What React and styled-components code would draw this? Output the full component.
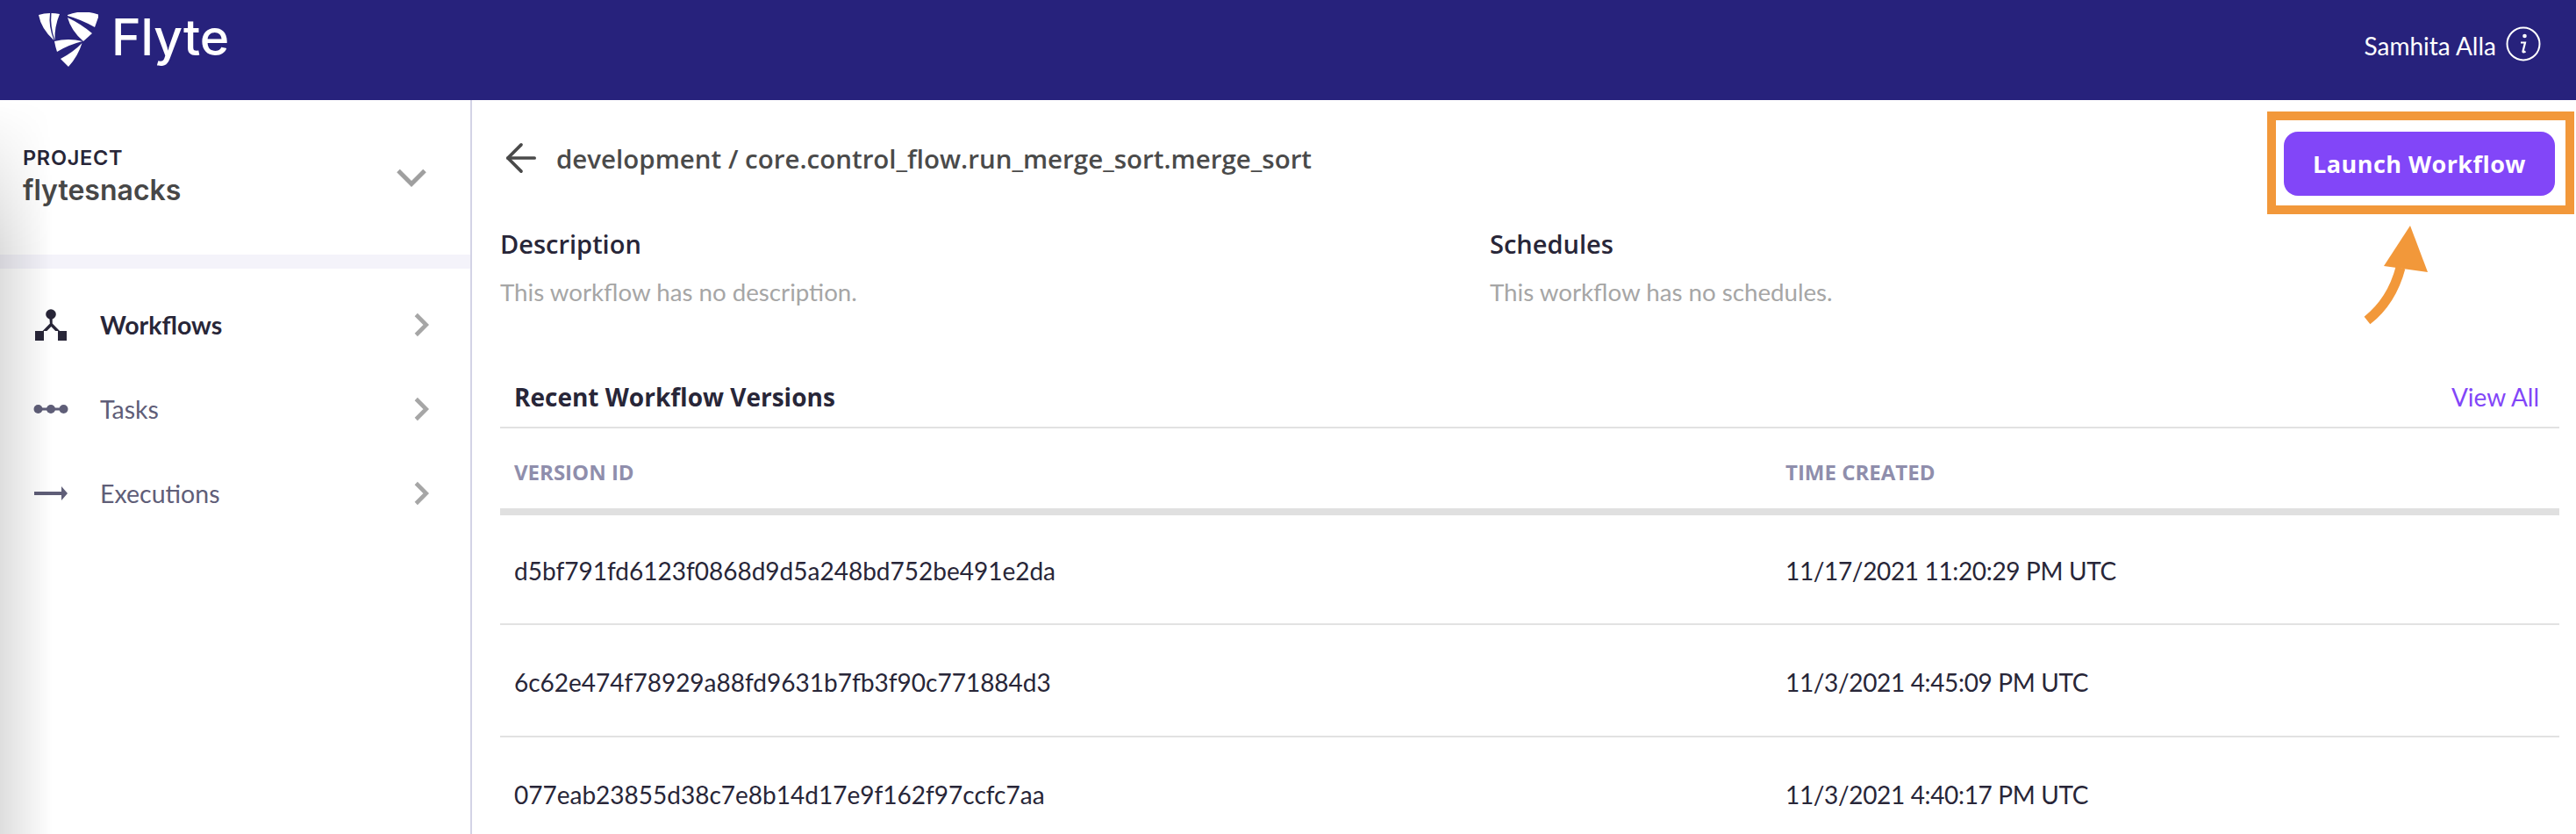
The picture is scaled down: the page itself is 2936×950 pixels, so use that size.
import styled, { createGlobalStyle } from "styled-components";
import { ArrowLeft, ChevronDown, ChevronRight } from "lucide-react";

const versions = [
  { id: "d5bf791fd6123f0868d9d5a248bd752be491e2da", time: "11/17/2021 11:20:29 PM UTC" },
  { id: "6c62e474f78929a88fd9631b7fb3f90c771884d3", time: "11/3/2021 4:45:09 PM UTC" },
  { id: "077eab23855d38c7e8b14d17e9f162f97ccfc7aa", time: "11/3/2021 4:40:17 PM UTC" },
];

const FlyteLogo = () => (
  <svg width="68" height="62" viewBox="14 4 68 62" fill="#fff">
    <path d="M14 7 Q20 5 27 5 Q25 20 31.500 36 Q17 23 14 7Z" />
    <path d="M28.500 5 Q33 5 38 6 Q32 20 32.500 36 Q27 20 28.500 5Z" />
    <path d="M47 7 Q65 0 83 7 L78 21 Q62 12 47 8Z" />
    <path d="M47 10 Q62 17 75 28 L65 37 Q51 25 47 10Z" />
    <path d="M32 37 Q48 33 64 37 Q48 41 35 49 Q33 43 32 37Z" />
    <path d="M63.500 39 Q59 54 48 66 L39 57 Q54 49 63.500 39Z" />
  </svg>
);

const WorkflowIcon = () => (
  <svg width="36" height="36" viewBox="0 0 36 36" fill="#282638">
    <circle cx="18" cy="6" r="5.800" />
    <path d="M16.300 9h3.400v7.500l8.300 8.500h-4.800l-4.900-5-4.900 5h-4.800l8.300-8.500z" />
    <rect x="0" y="25" width="10" height="11" />
    <rect x="26" y="25" width="10" height="11" />
  </svg>
);

const TasksIcon = () => (
  <svg width="40" height="12" viewBox="0 0 40 12" fill="#5f5e78">
    <rect x="4" y="4.500" width="32" height="3" />
    <circle cx="5.500" cy="6" r="5" />
    <circle cx="20" cy="6" r="5" />
    <circle cx="34.500" cy="6" r="5" />
  </svg>
);

const ExecutionsIcon = () => (
  <svg width="38" height="16" viewBox="0 0 38 16" fill="#5f5e78">
    <rect x="0" y="6" width="32" height="4" />
    <path d="M31 0l7 8-7 8z" />
  </svg>
);

const InfoIcon = () => (
  <svg width="40" height="40" viewBox="0 0 40 40" fill="none">
    <circle cx="20" cy="20" r="18.500" stroke="#fff" strokeWidth="2" />
    <circle cx="21.500" cy="11" r="2.300" fill="#fff" />
    <path d="M17 18.500h5l-2.500 10c-.2 1 .8 1.300 3 0" stroke="#fff" strokeWidth="2.200" />
  </svg>
);

const CurvedArrow = () => (
  <svg width="84" height="116" viewBox="0 0 84 116">
    <path d="M8 110 Q36 88 46 50" stroke="#f2983a" strokeWidth="11" fill="none" />
    <path d="M57 2 L77 55 L27 48 Z" fill="#f2983a" />
  </svg>
);

const navItems = [
  { label: "Workflows", icon: <WorkflowIcon />, active: true },
  { label: "Tasks", icon: <TasksIcon /> },
  { label: "Executions", icon: <ExecutionsIcon /> },
];

const App = () => {
  return (
    <Page>
      <GlobalStyle />
      <TopBar>
        <Brand>
          <FlyteLogo />
          <BrandName>Flyte</BrandName>
        </Brand>
        <UserBox>
          <span>Samhita Alla</span>
          <InfoIcon />
        </UserBox>
      </TopBar>
      <Body>
        <Sidebar>
          <ProjectBlock>
            <div>
              <ProjectLabel>PROJECT</ProjectLabel>
              <ProjectName>flytesnacks</ProjectName>
            </div>
            <ChevronDown size={60} color="#9f9f9f" strokeWidth={2} strokeLinecap="butt" strokeLinejoin="miter" />
          </ProjectBlock>
          <SideDivider />
          <NavList>
            {navItems.map((item) => (
              <NavRow key={item.label} $active={item.active}>
                <NavIcon>{item.icon}</NavIcon>
                <NavLabel>{item.label}</NavLabel>
                <ChevronRight size={46} color="#a6a6a6" strokeWidth={2.4} strokeLinecap="butt" strokeLinejoin="miter" />
              </NavRow>
            ))}
          </NavList>
        </Sidebar>
        <Main>
          <TitleRow>
            <BackLink>
              <ArrowLeft size={52} color="#4a4a4a" strokeWidth={1.7} />
            </BackLink>
            <Title>development / core.control_flow.run_merge_sort.merge_sort</Title>
            <Highlight>
              <LaunchButton>Launch Workflow</LaunchButton>
              <ArrowHolder>
                <CurvedArrow />
              </ArrowHolder>
            </Highlight>
          </TitleRow>
          <InfoGrid>
            <div>
              <InfoTitle>Description</InfoTitle>
              <InfoText>This workflow has no description.</InfoText>
            </div>
            <div>
              <InfoTitle>Schedules</InfoTitle>
              <InfoText>This workflow has no schedules.</InfoText>
            </div>
          </InfoGrid>
          <SectionHead>
            <SectionTitle>Recent Workflow Versions</SectionTitle>
            <ViewAll>View All</ViewAll>
          </SectionHead>
          <TableHead>
            <HeadCell>VERSION ID</HeadCell>
            <HeadCell>TIME CREATED</HeadCell>
          </TableHead>
          {versions.map((v, i) => (
            <TableRow key={v.id} $first={i === 0}>
              <Cell>{v.id}</Cell>
              <TimeCell>{v.time}</TimeCell>
            </TableRow>
          ))}
        </Main>
      </Body>
    </Page>
  );
};

export default App;

const GlobalStyle = createGlobalStyle`
  html, body {
    margin: 0;
    height: 100%;
    background: #fff;
    overflow: hidden;
  }
  * {
    box-sizing: border-box;
  }
`;

const Page = styled.div`
  width: 2936px;
  height: 950px;
  display: flex;
  flex-direction: column;
  font-family: Lato, "Liberation Sans", sans-serif;
  overflow: hidden;
`;

const TopBar = styled.header`
  height: 114px;
  flex: none;
  background: #27227c;
  display: flex;
  justify-content: space-between;
  padding: 14px 40px 0 44px;
`;

const Brand = styled.div`
  display: flex;
  align-items: flex-start;
  gap: 15px;
`;

const BrandName = styled.span`
  margin-top: 1px;
  font-family: Inter, sans-serif;
  font-size: 57px;
  font-weight: 500;
  line-height: 56px;
  color: #fff;
`;

const UserBox = styled.div`
  display: flex;
  align-items: flex-start;
  gap: 11px;
  padding-top: 16px;
  color: #fff;
  font-size: 28px;
  line-height: 44px;
`;

const Body = styled.div`
  flex: 1;
  display: flex;
  min-height: 0;
`;

const Sidebar = styled.aside`
  position: relative;
  width: 538px;
  flex: none;
  border-right: 2px solid #d3d3e6;
  &::before {
    content: "";
    position: absolute;
    inset: 0 auto 0 0;
    width: 60px;
    background: linear-gradient(90deg, rgba(0, 0, 0, 0.13), rgba(0, 0, 0, 0));
    -webkit-mask-image: linear-gradient(180deg, transparent 0, #000 170px);
    mask-image: linear-gradient(180deg, transparent 0, #000 170px);
    pointer-events: none;
  }
`;

const ProjectBlock = styled.div`
  height: 176px;
  display: flex;
  align-items: center;
  justify-content: space-between;
  padding: 0 37px 0 26px;
`;

const ProjectLabel = styled.div`
  font-family: Inter, sans-serif;
  font-size: 23.500px;
  font-weight: 600;
  line-height: 26px;
  letter-spacing: 0.7px;
  color: #282638;
`;

const ProjectName = styled.div`
  margin-top: 4px;
  font-family: Inter, sans-serif;
  font-size: 32px;
  font-weight: 600;
  line-height: 40px;
  color: #474747;
`;

const SideDivider = styled.div`
  height: 16px;
  background: #f4f3fa;
`;

const NavList = styled.nav`
  padding-top: 16px;
`;

const NavRow = styled.div`
  height: 96px;
  display: flex;
  align-items: center;
  padding: 0 33px 0 38px;
  font-weight: ${(p) => (p.$active ? 700 : 400)};
  color: ${(p) => (p.$active ? "#282638" : "#5f5e78")};
`;

const NavIcon = styled.div`
  width: 40px;
  display: flex;
  justify-content: center;
  margin-right: 36px;
`;

const NavLabel = styled.span`
  flex: 1;
  font-size: 28.500px;
`;

const Main = styled.main`
  flex: 1;
  min-width: 0;
  padding: 0 19px 0 32px;
`;

const TitleRow = styled.div`
  position: relative;
  height: 132px;
  margin-bottom: 2px;
  display: flex;
  align-items: center;
`;

const BackLink = styled.div`
  display: flex;
  margin: 0 14px 0 -2px;
`;

const Title = styled.h1`
  margin: 0;
  font-family: "Open Sans", sans-serif;
  font-size: 29.500px;
  font-weight: 600;
  color: #4a4a4a;
`;

const Highlight = styled.div`
  position: absolute;
  top: 13px;
  right: -17px;
  width: 350px;
  height: 117px;
  border: 10px solid #f2983a;
  padding: 13px 12px 0 9px;
`;

const ArrowHolder = styled.div`
  position: absolute;
  top: 118px;
  left: 96px;
`;

const LaunchButton = styled.button`
  width: 309px;
  height: 73px;
  border: 0;
  border-radius: 16px;
  background: #8246f8;
  color: #fff;
  font-family: "Open Sans", sans-serif;
  font-size: 27px;
  font-weight: 700;
  letter-spacing: 0.45px;
`;

const InfoGrid = styled.div`
  display: grid;
  grid-template-columns: 1128px 1fr;
  padding-top: 10px;
`;

const InfoTitle = styled.div`
  font-family: "Open Sans", sans-serif;
  font-size: 29px;
  font-weight: 600;
  line-height: 40px;
  color: #282638;
`;

const InfoText = styled.div`
  margin-top: 15px;
  font-size: 27.700px;
  line-height: 40px;
  color: #a6a6a6;
`;

const SectionHead = styled.div`
  margin-top: 62px;
  height: 73px;
  display: flex;
  align-items: center;
  justify-content: space-between;
  padding: 3px 23px 0 16px;
  border-bottom: 2px solid #e2e2e2;
`;

const SectionTitle = styled.h2`
  margin: 0;
  font-family: "Open Sans", sans-serif;
  font-size: 28px;
  font-weight: 700;
  color: #282638;
`;

const ViewAll = styled.a`
  font-size: 28px;
  color: #8246f8;
`;

const TableHead = styled.div`
  height: 99px;
  display: grid;
  grid-template-columns: 1449px 1fr;
  align-items: center;
  padding: 7px 0 0 16px;
  border-bottom: 8px solid #e0e0e0;
`;

const HeadCell = styled.div`
  font-family: "Open Sans", sans-serif;
  font-size: 24px;
  font-weight: 700;
  color: #8f8eac;
`;

const TableRow = styled.div`
  height: ${(p) => (p.$first ? 125 : 128)}px;
  display: grid;
  grid-template-columns: 1449px 1fr;
  align-items: center;
  padding: 3px 0 0 16px;
  border-bottom: 2px solid #e2e2e2;
`;

const Cell = styled.div`
  font-size: 28px;
  color: #282638;
`;

const TimeCell = styled(Cell)`
  letter-spacing: -0.35px;
`;
